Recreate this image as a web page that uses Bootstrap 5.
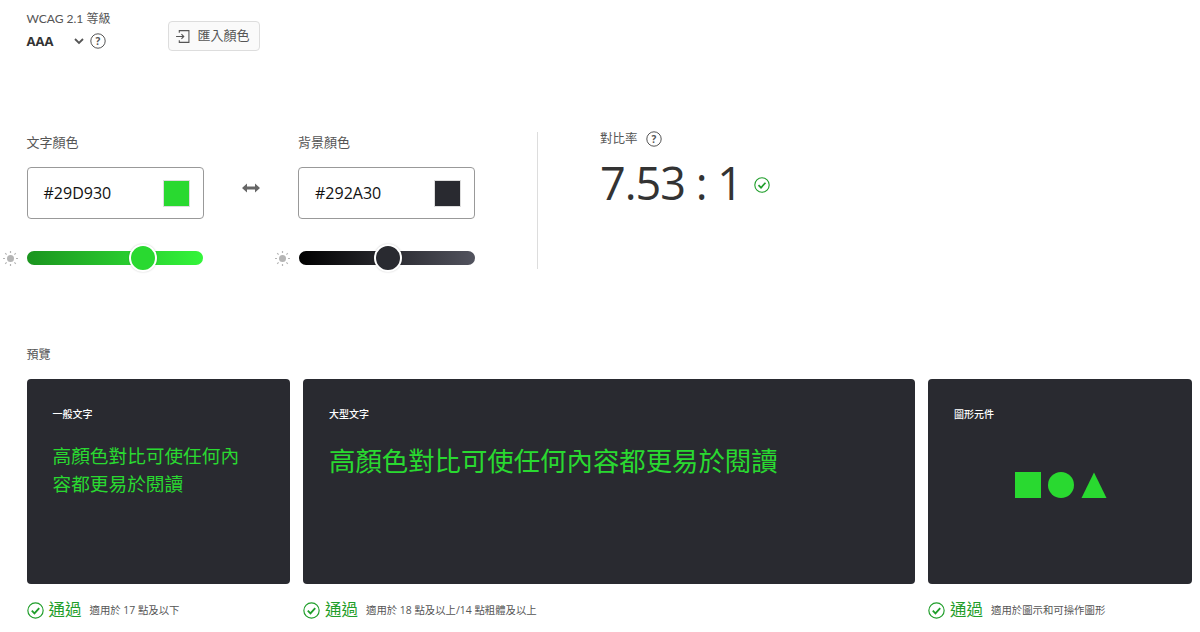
<!DOCTYPE html>
<html lang="zh-Hant">
<head>
  <meta charset="UTF-8" />
  <meta name="viewport" content="width=device-width, initial-scale=1" />
  <title>色彩對比檢查工具</title>
  <link href="https://cdn.jsdelivr.net/npm/bootstrap@5.3.0/dist/css/bootstrap.min.css" rel="stylesheet" />
  <style>
    body { font-family: "Open Sans", "Noto Sans CJK TC", sans-serif; color: #2e2e2e; background: #fff; overflow: hidden; }
    .page-wrap { padding: 11px 8px 0 26.5px; width: 1200px; height: 632px; overflow: hidden; }
    .top-bar { height: 121px; align-items: flex-start; }
    .level-box { width: 141.5px; }
    .level-label { font-family: "Lato", "Noto Sans CJK TC", sans-serif; font-size: 12px; line-height: 16px; color: #555; }
    .level-value { font-size: 13px; font-weight: 700; line-height: 20px; margin-top: 4px; color: #333; }
    .level-name { width: 46px; }
    .ico-help { width: 16px; height: 16px; color: #555; }
    .ico-chev { width: 12px; height: 12px; color: #555; margin-right: 5px; }
    .import-btn { width: 92px; height: 30px; margin-top: 10px; padding: 0 3px 0 0; font-size: 13px; color: #555; background: #fafafa; border: 1px solid #ddd; border-radius: 4px; }
    .import-btn:hover { color: #555; background: #fafafa; border-color: #ddd; }
    .ico-import { width: 15px; height: 15px; margin-right: 7px; }

    .picker-area { height: 137px; }
    .picker-col { width: 177px; }
    .picker-label { font-size: 13px; line-height: 20px; color: #555; margin-bottom: 15px; }
    .hex-box { height: 52px; border: 1px solid #999; border-radius: 4px; padding: 0 13px 0 16px; font-size: 16px; font-weight: 500; color: #111; background: #fff; }
    .hex-swatch { width: 27px; height: 27px; border: 1px solid #ddd; }
    .swatch-fg { background: #29d930; }
    .swatch-bg { background: #292a30; }
    .swap-col { width: 94.5px; padding-top: 50px; }
    .ico-swap { width: 18px; height: 12px; color: #666; }
    .slider-row { margin-top: 23px; margin-left: -26.5px; height: 32px; }
    .ico-sun { width: 17px; height: 17px; margin-left: 2px; margin-right: 8px; color: #b5b5b5; flex: none; }
    .tone-range { width: 176px; height: 32px; padding: 0; margin: 0; background: transparent; flex: none; }
    .tone-range::-webkit-slider-runnable-track { height: 14px; border-radius: 7px; }
    .tone-range::-webkit-slider-thumb { -webkit-appearance: none; appearance: none; width: 28px; height: 28px; margin-top: -7px; border-radius: 50%; border: 2px solid #fff; box-shadow: 0 0 2px rgba(0,0,0,.2); }
    .tone-fg::-webkit-slider-runnable-track { background: linear-gradient(90deg, #1b941f, #33f53a); }
    .tone-fg::-webkit-slider-thumb { background: #29d930; }
    .tone-bg::-webkit-slider-runnable-track { background: linear-gradient(90deg, #000, #52535e); }
    .tone-bg::-webkit-slider-thumb { background: #292a30; }
    .split-line { width: 1px; height: 137px; background: #ddd; margin-left: 62px; margin-right: 62px; }
    .ratio-box { margin-top: -1px; }
    .ratio-label { font-size: 12.5px; line-height: 14px; color: #555; }
    .ratio-value { font-size: 45px; font-weight: 400; letter-spacing: -1px; line-height: 56px; color: #333; margin-top: 8px; }
    .ico-ok-sm { width: 16px; height: 16px; color: #1f9e2a; margin-left: 12px; margin-top: 12px; }

    .preview-title { font-size: 12px; line-height: 16px; color: #555; margin-top: 78px; margin-bottom: 16px; }
    .preview-grid { display: grid; grid-template-columns: 263.5px 612px 263.5px; column-gap: 13px; }
    .demo-card { height: 205px; padding: 28px 26px; background: #292a30; color: #29d930; border: 0; border-radius: 4px; }
    .demo-head { font-size: 10px; line-height: 14px; color: #fff; font-weight: 500; }
    .demo-small { width: 195px; font-size: 18.67px; line-height: 28px; margin-top: 21px; }
    .demo-big { font-size: 26.4px; line-height: 32px; margin-top: 24px; }
    .shape-row { gap: 7px; margin-top: 51px; padding-left: 3px; }
    .shape-svg { width: 26px; height: 26px; fill: #29d930; }
    .result-row { margin-top: 16px; }
    .ico-ok { width: 17px; height: 17px; color: #1f9e2a; margin-right: 5px; }
    .result-word { font-size: 16.5px; line-height: 20px; color: #1f9e2a; margin-right: 8px; }
    .result-note { font-size: 10.4px; line-height: 20px; color: #555; }
  </style>
</head>
<body>
  <div class="page-wrap">
    <!-- Level and import -->
    <div class="d-flex top-bar">
      <div class="level-box">
        <div class="level-label">WCAG 2.1 等級</div>
        <div class="level-value d-flex align-items-center">
          <span class="level-name">AAA</span>
          <svg class="ico-chev" viewBox="0 0 12 12" fill="none" stroke="currentColor" stroke-width="1.8"><path d="M2 4l4 4 4-4"/></svg>
          <svg class="ico-help" viewBox="0 0 16 16"><circle cx="8" cy="8" r="7.2" fill="none" stroke="currentColor" stroke-width="1"/><text x="8" y="11.6" text-anchor="middle" font-size="10" font-weight="700" fill="currentColor">?</text></svg>
        </div>
      </div>
      <button type="button" class="btn import-btn d-flex align-items-center justify-content-center">
        <svg class="ico-import" viewBox="0 0 14 14" fill="none" stroke="currentColor" stroke-width="1"><path d="M4 3.5V1.5h9v11H4v-2M1 7h7M6 4.8L8.2 7 6 9.2"/></svg>
        匯入顏色
      </button>
    </div>

    <!-- Colour pickers and ratio -->
    <div class="d-flex picker-area">
      <div class="picker-col">
        <div class="picker-label">文字顏色</div>
        <div class="hex-box d-flex align-items-center justify-content-between">
          <span>#29D930</span><span class="hex-swatch swatch-fg"></span>
        </div>
        <div class="slider-row d-flex align-items-center">
          <svg class="ico-sun" viewBox="0 0 17 17"><circle cx="8.5" cy="8.5" r="3.5" fill="currentColor"/><path d="M8.500 1v2M8.500 14v2M1 8.500h2M14 8.500h2M3.200 3.200l1.400 1.400M12.400 12.400l1.400 1.400M3.200 13.800l1.400-1.400M12.400 4.600l1.400-1.400" stroke="currentColor" stroke-width="1.2"/></svg>
          <input type="range" class="form-range tone-range tone-fg" min="0" max="100" value="69" />
        </div>
      </div>
      <div class="swap-col d-flex justify-content-center">
        <svg class="ico-swap" viewBox="0 0 18 12" fill="currentColor"><path d="M0 6l5-4.500V4.500h8V1.500L18 6l-5 4.500V7.500H5v3z"/></svg>
      </div>
      <div class="picker-col">
        <div class="picker-label">背景顏色</div>
        <div class="hex-box d-flex align-items-center justify-content-between">
          <span>#292A30</span><span class="hex-swatch swatch-bg"></span>
        </div>
        <div class="slider-row d-flex align-items-center">
          <svg class="ico-sun" viewBox="0 0 17 17"><circle cx="8.5" cy="8.5" r="3.5" fill="currentColor"/><path d="M8.500 1v2M8.500 14v2M1 8.500h2M14 8.500h2M3.200 3.200l1.400 1.400M12.400 12.400l1.400 1.400M3.200 13.800l1.400-1.400M12.400 4.600l1.400-1.400" stroke="currentColor" stroke-width="1.2"/></svg>
          <input type="range" class="form-range tone-range tone-bg" min="0" max="100" value="51" />
        </div>
      </div>
      <div class="split-line"></div>
      <div class="ratio-box">
        <div class="ratio-label d-flex align-items-center gap-2">
          對比率
          <svg class="ico-help" viewBox="0 0 16 16"><circle cx="8" cy="8" r="7.2" fill="none" stroke="currentColor" stroke-width="1"/><text x="8" y="11.6" text-anchor="middle" font-size="10" font-weight="700" fill="currentColor">?</text></svg>
        </div>
        <div class="d-flex align-items-center">
          <span class="ratio-value">7.53 : 1</span>
          <svg class="ico-ok-sm" viewBox="0 0 16 16" fill="none" stroke="currentColor"><circle cx="8" cy="8" r="7.2" stroke-width="1.1"/><path d="M4.500 8.200l2.500 2.500 4.500-5" stroke-width="1.7"/></svg>
        </div>
      </div>
    </div>

    <!-- Preview -->
    <div class="preview-title">預覽</div>
    <div class="preview-grid">
      <div>
        <div class="card demo-card">
          <div class="demo-head">一般文字</div>
          <div class="demo-small">高顏色對比可使任何內容都更易於閱讀</div>
        </div>
        <div class="result-row d-flex align-items-center">
          <svg class="ico-ok" viewBox="0 0 16 16" fill="none" stroke="currentColor"><circle cx="8" cy="8" r="7.2" stroke-width="1.1"/><path d="M4.500 8.200l2.500 2.500 4.500-5" stroke-width="1.7"/></svg>
          <span class="result-word">通過</span><span class="result-note">適用於 17 點及以下</span>
        </div>
      </div>
      <div>
        <div class="card demo-card">
          <div class="demo-head">大型文字</div>
          <div class="demo-big">高顏色對比可使任何內容都更易於閱讀</div>
        </div>
        <div class="result-row d-flex align-items-center">
          <svg class="ico-ok" viewBox="0 0 16 16" fill="none" stroke="currentColor"><circle cx="8" cy="8" r="7.2" stroke-width="1.1"/><path d="M4.500 8.200l2.500 2.500 4.500-5" stroke-width="1.7"/></svg>
          <span class="result-word">通過</span><span class="result-note">適用於 18 點及以上/14 點粗體及以上</span>
        </div>
      </div>
      <div>
        <div class="card demo-card">
          <div class="demo-head">圖形元件</div>
          <div class="shape-row d-flex justify-content-center">
            <svg class="shape-svg" viewBox="0 0 26 26"><rect width="26" height="26"/></svg>
            <svg class="shape-svg" viewBox="0 0 26 26"><circle cx="13" cy="13" r="13"/></svg>
            <svg class="shape-svg" viewBox="0 0 26 26"><path d="M13 0.500L25.500 26H0.500z"/></svg>
          </div>
        </div>
        <div class="result-row d-flex align-items-center">
          <svg class="ico-ok" viewBox="0 0 16 16" fill="none" stroke="currentColor"><circle cx="8" cy="8" r="7.2" stroke-width="1.1"/><path d="M4.500 8.200l2.500 2.500 4.500-5" stroke-width="1.7"/></svg>
          <span class="result-word">通過</span><span class="result-note">適用於圖示和可操作圖形</span>
        </div>
      </div>
    </div>
  </div>
  <script src="https://cdn.jsdelivr.net/npm/bootstrap@5.3.0/dist/js/bootstrap.bundle.min.js"></script>
</body>
</html>
